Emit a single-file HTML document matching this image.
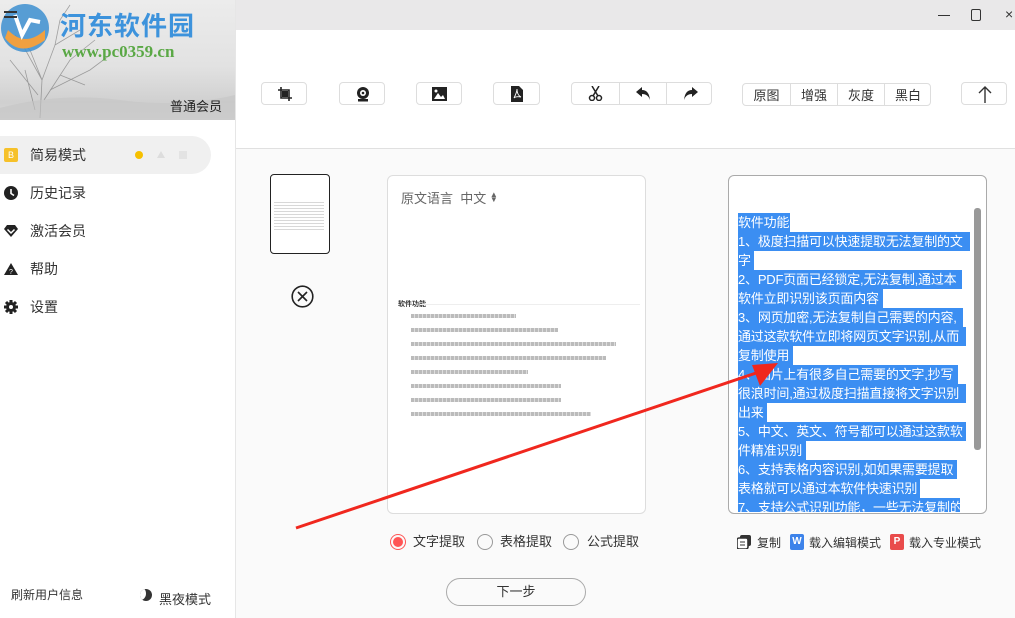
<!DOCTYPE html>
<html><head><meta charset="utf-8">
<style>
*{margin:0;padding:0;box-sizing:border-box}
body{width:1015px;height:618px;overflow:hidden;position:relative;background:#fafafa;font-family:"Liberation Sans","Noto Sans CJK SC",sans-serif;color:#333}
.abs{position:absolute}
#side{left:0;top:0;width:236px;height:618px;background:#fff;border-right:1px solid #e6e6e6}
#hero{left:0;top:0;width:235px;height:120px;background:linear-gradient(180deg,#ececec 0%,#e2e2e2 55%,#d0d0d0 85%,#d6d6d6 100%);overflow:hidden}
.mi{position:absolute;left:0;width:211px;height:38px;font-size:14px;line-height:38px;padding-left:30px;color:#333}
.ic{position:absolute;left:4px;top:12px;width:14px;height:14px}
#title{left:236px;top:0;width:779px;height:30px;background:#e9e8e9}
#tool{left:236px;top:30px;width:779px;height:119px;background:#fff;border-bottom:1px solid #e0e0e0}
.b{position:absolute;top:82px;height:23px;border:1px solid #ddd;border-radius:4px;background:#fff}
.seg{position:absolute;top:0;height:100%;border-left:1px solid #ddd;display:flex;align-items:center;justify-content:center;font-size:13px;color:#333}
.panel{position:absolute;background:#fff;border:1px solid #ddd;border-radius:6px}
.sel{position:absolute;left:738px;font-size:13px;line-height:19px;height:19px;background:#3b8ef2;color:#fff;white-space:nowrap;overflow:hidden;letter-spacing:-0.2px}
.dl{position:absolute;left:411px;height:4px;background:repeating-linear-gradient(90deg,#bbb 0,#bbb 3px,#ddd 3px,#ddd 4px)}
.radio{position:absolute;top:534px;width:16px;height:16px;border:1px solid #999;border-radius:50%}
.rl{position:absolute;top:534px;font-size:13px;line-height:16px;color:#333}
</style></head><body>
<div id="side" class="abs">
 <div id="hero" class="abs">
  <svg class="abs" style="left:0;top:0" width="235" height="120">
   <g stroke="#666" stroke-width=".8" fill="none" opacity=".55">
    <path d="M40 118 L42 80 L30 50 M42 80 L55 45 L60 20 M55 45 L80 30 M42 80 L20 40 M30 50 L15 35 M60 20 L70 5 M44 100 L70 60 L95 40"/>
    <path d="M35 110 L25 70 M50 90 L90 70 L110 55 M38 95 L10 60 M60 75 L85 85"/>
   </g>
   <path d="M0 108 Q60 92 120 100 T235 95 L235 120 L0 120Z" fill="#c4c4c4" opacity=".6"/>
   <circle cx="25" cy="28" r="24" fill="#3d8fd0" opacity=".85"/>
   <path d="M5 38 Q20 58 45 40 L45 30 Q25 48 8 30Z" fill="#f0a040"/>
   <path d="M15 15 L22 35 L30 20 L40 22" stroke="#fff" stroke-width="4" fill="none"/>
   <rect x="4" y="11" width="13" height="2" fill="#333"/><rect x="4" y="16" width="13" height="2" fill="#333"/>
  </svg>
  <div class="abs" style="left:60px;top:6px;font-size:26px;font-weight:bold;color:#3d93dc;letter-spacing:1px">河东软件园</div>
  <div class="abs" style="left:62px;top:42px;font-size:17px;font-weight:bold;color:#5aa845;font-family:'Liberation Serif',serif">www.pc0359.cn</div>
  <div class="abs" style="left:170px;top:96px;font-size:13px;color:#222">普通会员</div>
 </div>
 <div class="mi" style="top:136px;background:#f0f0f0;border-radius:0 19px 19px 0">
  <div class="ic" style="background:#f6c12a;border-radius:2px;color:#fff;font-size:9px;line-height:14px;text-align:center">B</div>简易模式
  <div class="abs" style="left:135px;top:15px;width:8px;height:8px;border-radius:50%;background:#f6c000"></div>
  <div class="abs" style="left:157px;top:15px;width:0;height:0;border-left:4px solid transparent;border-right:4px solid transparent;border-bottom:7px solid #ddd"></div>
  <div class="abs" style="left:179px;top:15px;width:8px;height:8px;background:#e3e3e3"></div>
 </div>
 <div class="mi" style="top:174px"><svg class="ic" viewBox="0 0 14 14"><circle cx="7" cy="7" r="7" fill="#222"/><path d="M7 3v4.5l3 2" stroke="#fff" stroke-width="1.6" fill="none"/></svg>历史记录</div>
 <div class="mi" style="top:212px"><svg class="ic" viewBox="0 0 14 14"><path d="M0 5 L3 1 H11 L14 5 L7 13Z" fill="#222"/><path d="M3.5 5.5 L7 9 L10.5 5.5" stroke="#fff" stroke-width="1.5" fill="none"/></svg>激活会员</div>
 <div class="mi" style="top:250px"><svg class="ic" viewBox="0 0 14 14"><path d="M7 1 L14 13 H0Z" fill="#222"/><text x="7" y="12" font-size="7" fill="#fff" text-anchor="middle">?</text></svg>帮助</div>
 <div class="mi" style="top:288px"><svg class="ic" viewBox="0 0 14 14"><circle cx="7" cy="7" r="5" fill="#222"/><g stroke="#222" stroke-width="3"><path d="M7 0v14M0 7h14M2 2l10 10M12 2L2 12"/></g><circle cx="7" cy="7" r="2" fill="#fff"/></svg>设置</div>
 <div class="abs" style="left:11px;top:586px;font-size:12px;color:#333">刷新用户信息</div>
 <div class="abs" style="left:140px;top:589px;width:12px;height:12px;border-radius:50%;background:#333;overflow:hidden"><div style="position:absolute;left:-5px;top:-2px;width:11px;height:13px;border-radius:50%;background:#fff"></div></div>
 <div class="abs" style="left:159px;top:589px;font-size:13px;color:#333">黑夜模式</div>
</div>

<div id="title" class="abs">
 <div class="abs" style="left:702px;top:15px;width:12px;height:1px;background:#333"></div>
 <div class="abs" style="left:735px;top:9px;width:10px;height:12px;border:1px solid #333;border-radius:2px"></div>
 <div class="abs" style="left:769px;top:6px;font-size:14px;color:#333">×</div>
</div>
<div id="tool" class="abs"></div>
<div class="b" style="left:261px;width:46px"><svg class="abs" style="left:16px;top:4px" width="14" height="14" viewBox="0 0 14 14"><path d="M3 0v11h11M0 3h11v11" stroke="#222" stroke-width="1.6" fill="none"/><rect x="4" y="4" width="6" height="6" fill="#222"/></svg></div>
<div class="b" style="left:339px;width:46px"><svg class="abs" style="left:16px;top:4px" width="14" height="15" viewBox="0 0 14 15"><circle cx="7" cy="6" r="6" fill="#222"/><circle cx="7" cy="6" r="3" fill="#fff"/><circle cx="7" cy="6" r="1.3" fill="#222"/><rect x="2" y="12" width="10" height="2.5" fill="#222"/></svg></div>
<div class="b" style="left:416px;width:46px"><svg class="abs" style="left:15px;top:4px" width="15" height="14" viewBox="0 0 15 14"><rect width="15" height="14" fill="#222"/><path d="M2 12 L6 6 L9 10 L11 8 L13 12Z" fill="#fff"/><circle cx="4" cy="4" r="1.5" fill="#fff"/></svg></div>
<div class="b" style="left:493px;width:47px"><svg class="abs" style="left:17px;top:3px" width="12" height="16" viewBox="0 0 12 16"><path d="M0 0h8l4 4v12H0Z" fill="#222"/><path d="M3 12 Q6 6 6 3 Q6 9 10 11 Q5 10 3 12" stroke="#fff" stroke-width=".9" fill="none"/></svg></div>
<div class="b" style="left:571px;width:141px">
 <div class="seg" style="left:0;width:47px;border:none"><svg width="15" height="15" viewBox="0 0 15 15"><circle cx="4" cy="12" r="2.5" stroke="#222" stroke-width="1.5" fill="none"/><circle cx="11" cy="12" r="2.5" stroke="#222" stroke-width="1.5" fill="none"/><path d="M5 10 L11 0 M10 10 L4 0" stroke="#222" stroke-width="1.5"/></svg></div>
 <div class="seg" style="left:47px;width:47px"><svg width="15" height="13" viewBox="0 0 15 13"><path d="M6 0 L0 5 L6 10 V7 Q12 7 14 13 Q13 3 6 3Z" fill="#222"/></svg></div>
 <div class="seg" style="left:94px;width:47px"><svg width="15" height="13" viewBox="0 0 15 13"><path d="M9 0 L15 5 L9 10 V7 Q3 7 1 13 Q2 3 9 3Z" fill="#222"/></svg></div>
</div>
<div class="b" style="left:742px;width:189px;top:83px">
 <div class="seg" style="left:0;width:47px;border:none">原图</div>
 <div class="seg" style="left:47px;width:47px">增强</div>
 <div class="seg" style="left:94px;width:47px">灰度</div>
 <div class="seg" style="left:141px;width:47px">黑白</div>
</div>
<div class="b" style="left:961px;width:46px"><svg class="abs" style="left:16px;top:3px" width="14" height="17" viewBox="0 0 14 17"><path d="M7 17V1M1 7L7 1L13 7" stroke="#333" stroke-width="1.4" fill="none"/></svg></div>

<div class="abs" style="left:270px;top:174px;width:60px;height:80px;border:1.3px solid #222;border-radius:4px;background:#fff">
 <div class="abs" style="left:3px;top:27px;width:50px;height:30px;background:repeating-linear-gradient(180deg,#d8d8d8 0,#d8d8d8 1px,transparent 1px,transparent 3px)"></div>
</div>
<svg class="abs" style="left:291px;top:285px" width="23" height="23" viewBox="0 0 23 23"><circle cx="11.5" cy="11.5" r="10.3" stroke="#222" stroke-width="1.6" fill="none"/><path d="M7 7l9 9M16 7l-9 9" stroke="#222" stroke-width="1.6"/></svg>

<div class="panel" style="left:387px;top:175px;width:259px;height:339px">
 <div class="abs" style="left:13px;top:12px;font-size:13px;color:#666">原文语言 &nbsp;中文 <span style="font-size:8px;display:inline-block;line-height:5px;vertical-align:1px">▲<br>▼</span></div>
</div>
<div class="abs" style="left:398px;top:299px;font-size:7px;color:#333;font-weight:bold">软件功能</div>
<div class="abs" style="left:420px;top:304px;width:220px;height:1px;background:#eee"></div>
<div class="dl" style="top:314px;width:105px"></div>
<div class="dl" style="top:328px;width:147px"></div>
<div class="dl" style="top:342px;width:205px"></div>
<div class="dl" style="top:356px;width:195px"></div>
<div class="dl" style="top:370px;width:117px"></div>
<div class="dl" style="top:384px;width:150px"></div>
<div class="dl" style="top:398px;width:150px"></div>
<div class="dl" style="top:412px;width:180px"></div>

<div class="panel" style="left:728px;top:175px;width:259px;height:339px;border-color:#aaa;overflow:hidden"></div>
<div class="sel" style="top:213px;width:52px">软件功能</div>
<div class="sel" style="top:232px;width:232px">1、极度扫描可以快速提取无法复制的文</div>
<div class="sel" style="top:251px;width:16px">字</div>
<div class="sel" style="top:270px;width:224px">2、PDF页面已经锁定,无法复制,通过本</div>
<div class="sel" style="top:289px;width:145px">软件立即识别该页面内容</div>
<div class="sel" style="top:308px;width:225px">3、网页加密,无法复制自己需要的内容,</div>
<div class="sel" style="top:327px;width:228px">通过这款软件立即将网页文字识别,从而</div>
<div class="sel" style="top:346px;width:55px">复制使用</div>
<div class="sel" style="top:365px;width:220px">4、图片上有很多自己需要的文字,抄写</div>
<div class="sel" style="top:384px;width:228px">很浪时间,通过极度扫描直接将文字识别</div>
<div class="sel" style="top:403px;width:29px">出来</div>
<div class="sel" style="top:422px;width:228px">5、中文、英文、符号都可以通过这款软</div>
<div class="sel" style="top:441px;width:68px">件精准识别</div>
<div class="sel" style="top:460px;width:219px">6、支持表格内容识别,如如果需要提取</div>
<div class="sel" style="top:479px;width:182px">表格就可以通过本软件快速识别</div>
<div class="sel" style="top:498px;width:222px;height:14px">7、支持公式识别功能，一些无法复制的</div>
<div class="abs" style="left:974px;top:208px;width:7px;height:242px;background:#999;border-radius:3px"></div>

<svg class="abs" style="left:0;top:0;pointer-events:none" width="1015" height="618"><path d="M296 528 L765 370" stroke="#f0271e" stroke-width="3"/><path d="M778 363 L752 365 L760 386Z" fill="#f0271e"/></svg>

<div class="radio" style="left:390px;border-color:#f55"><div style="position:absolute;left:2px;top:2px;width:10px;height:10px;border-radius:50%;background:#f55"></div></div>
<div class="rl" style="left:413px">文字提取</div>
<div class="radio" style="left:477px"></div><div class="rl" style="left:500px">表格提取</div>
<div class="radio" style="left:563px"></div><div class="rl" style="left:587px">公式提取</div>
<div class="abs" style="left:446px;top:578px;width:140px;height:28px;border:1px solid #aaa;border-radius:14px;background:#fafafa;text-align:center;line-height:26px;font-size:13px">下一步</div>

<svg class="abs" style="left:737px;top:535px" width="14" height="14" viewBox="0 0 14 14"><rect x="3" y="0" width="11" height="11" rx="2" fill="#333"/><rect x="0" y="3" width="11" height="11" rx="2" fill="#fff" stroke="#333" stroke-width="1.6"/><path d="M3 7h5M3 10h5" stroke="#333"/></svg>
<div class="abs" style="left:757px;top:534px;font-size:12px">复制</div>
<div class="abs" style="left:790px;top:534px;width:14px;height:16px;background:#3d83ea;border-radius:2px;color:#fff;font-size:10px;text-align:center;line-height:16px;font-weight:bold">W</div>
<div class="abs" style="left:809px;top:534px;font-size:12px">载入编辑模式</div>
<div class="abs" style="left:890px;top:534px;width:14px;height:16px;background:#e94b4b;border-radius:2px;color:#fff;font-size:10px;text-align:center;line-height:16px;font-weight:bold">P</div>
<div class="abs" style="left:909px;top:534px;font-size:12px">载入专业模式</div>
</body></html>
